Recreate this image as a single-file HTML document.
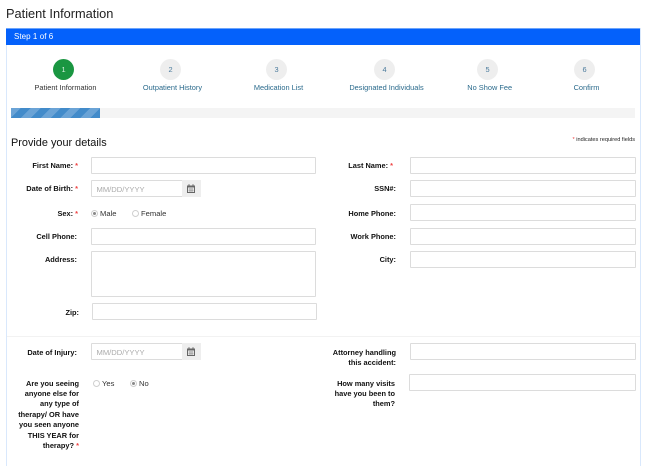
<!DOCTYPE html>
<html><head><meta charset="utf-8"><style>
html,body{margin:0;padding:0;background:#fff}
body{width:645px;height:466px;overflow:hidden;position:relative;font-family:"Liberation Sans",sans-serif;color:#333}
#w{position:absolute;left:0;top:0;width:645px;height:466px;filter:blur(.35px)}
#w div,#w span.a{position:absolute}
.i{background:#fff;border:1px solid #dcdcdc;box-sizing:border-box;border-radius:1px}
.l{font-size:7.4px;font-weight:bold;text-align:right;line-height:10.4px;color:#111;white-space:nowrap}
.c{width:21px;height:21px;border-radius:50%;background:#eee;color:#4a7a9c;font-size:7.4px;line-height:21px;text-align:center;top:59px}
.t{font-size:7.4px;line-height:10px;top:82.5px;color:#2a6a8c;text-align:center;width:120px;white-space:nowrap}
.r{color:#ef4444}
.ad{background:#eee;box-sizing:border-box}
.ph{font-size:7.6px;color:#aaa;line-height:10px;white-space:nowrap}
.rb{width:5px;height:5px;border-radius:50%;border:1px solid #cfcfcf;background:#fff;box-sizing:content-box}
.rb.on::after{content:"";position:absolute;left:1px;top:1px;width:3px;height:3px;border-radius:50%;background:#888}
.rt{font-size:7.6px;line-height:10px;color:#333;white-space:nowrap}
</style></head><body><div id="w">
<div style="left:6px;top:6px;font-size:12.8px;line-height:16px;color:#222;white-space:nowrap">Patient Information</div>

<div style="left:6px;top:28px;width:635px;height:438px;border:1px solid #d9e8fc;border-bottom:0;box-sizing:border-box"></div>
<div style="left:6px;top:28px;width:634px;height:17px;background:#0461fb;border-top:1px solid #6ba4fb;box-sizing:border-box"></div>
<div style="left:14px;top:32px;font-size:8px;line-height:10px;color:#fff;white-space:nowrap;letter-spacing:.05px">Step 1 of 6</div>

<div class="c" style="left:53px;background:#1a9641;color:#d6f0de">1</div>
<div class="c" style="left:160px">2</div>
<div class="c" style="left:266px">3</div>
<div class="c" style="left:374px">4</div>
<div class="c" style="left:477px">5</div>
<div class="c" style="left:574px">6</div>
<div class="t" style="left:5.5px;color:#333">Patient Information</div>
<div class="t" style="left:112.5px">Outpatient History</div>
<div class="t" style="left:218.5px">Medication List</div>
<div class="t" style="left:326.5px">Designated Individuals</div>
<div class="t" style="left:429.7px">No Show Fee</div>
<div class="t" style="left:526.5px">Confirm</div>

<div style="left:11px;top:108px;width:624px;height:10px;background:#f4f4f4"></div>
<div style="left:11px;top:108px;width:89px;height:10px;background:repeating-linear-gradient(-45deg,#428bca 0,#428bca 7px,#6aa3d6 7px,#6aa3d6 14px)"></div>

<div style="left:11px;top:136px;font-size:10.9px;line-height:14px;color:#111;white-space:nowrap">Provide your details</div>
<div style="right:10px;top:136px;font-size:5.6px;line-height:8px;color:#222;white-space:nowrap"><span class="r">*</span> indicates required fields</div>

<div class="l" style="right:567px;top:161px">First Name: <span class="r">*</span></div>
<div class="i" style="left:91px;top:157px;width:225px;height:17px"></div>
<div class="l" style="right:567px;top:184px">Date of Birth: <span class="r">*</span></div>
<div class="i" style="left:91px;top:180px;width:92px;height:17px"></div>
<div class="ph" style="left:96.5px;top:184.5px">MM/DD/YYYY</div>
<div class="ad" style="left:182px;top:180px;width:19px;height:17px"></div>
<svg style="position:absolute;left:187px;top:184px" width="8" height="9" viewBox="0 0 8 9"><path d="M.5 2h7v6.5h-7z" fill="none" stroke="#666" stroke-width="1"/><path d="M.5 1.5h7V3.5h-7z" fill="#666"/><path d="M2 .3v1.6M6 .3v1.6" stroke="#666"/><path d="M1.5 5h5M1.5 6.8h5M3 4v4M5 4v4" stroke="#888" stroke-width=".6"/></svg>

<div class="l" style="right:567px;top:209px">Sex: <span class="r">*</span></div>
<div class="rb on" style="left:91px;top:210px"></div><div class="rt" style="left:100px;top:209px">Male</div>
<div class="rb" style="left:132px;top:210px"></div><div class="rt" style="left:141px;top:209px">Female</div>

<div class="l" style="right:568px;top:232px">Cell Phone:</div>
<div class="i" style="left:91px;top:228px;width:225px;height:17px"></div>
<div class="l" style="right:568px;top:255px">Address:</div>
<div class="i" style="left:91px;top:251px;width:225px;height:46px"></div>
<div class="l" style="right:566px;top:308px">Zip:</div>
<div class="i" style="left:92px;top:303px;width:225px;height:17px"></div>

<div class="l" style="right:252px;top:161px">Last Name: <span class="r">*</span></div>
<div class="i" style="left:410px;top:157px;width:226px;height:17px"></div>
<div class="l" style="right:249px;top:184px">SSN#:</div>
<div class="i" style="left:410px;top:180px;width:226px;height:17px"></div>
<div class="l" style="right:249px;top:209px">Home Phone:</div>
<div class="i" style="left:410px;top:204px;width:226px;height:17px"></div>
<div class="l" style="right:249px;top:232px">Work Phone:</div>
<div class="i" style="left:410px;top:228px;width:226px;height:17px"></div>
<div class="l" style="right:249px;top:255px">City:</div>
<div class="i" style="left:410px;top:251px;width:226px;height:17px"></div>

<div style="left:7px;top:336px;width:633px;height:1px;background:#f2f2f2"></div>

<div class="l" style="right:568px;top:347.5px">Date of Injury:</div>
<div class="i" style="left:91px;top:343px;width:92px;height:17px"></div>
<div class="ph" style="left:96.5px;top:347.5px">MM/DD/YYYY</div>
<div class="ad" style="left:182px;top:343px;width:19px;height:17px"></div>
<svg style="position:absolute;left:187px;top:347px" width="8" height="9" viewBox="0 0 8 9"><path d="M.5 2h7v6.5h-7z" fill="none" stroke="#666" stroke-width="1"/><path d="M.5 1.5h7V3.5h-7z" fill="#666"/><path d="M2 .3v1.6M6 .3v1.6" stroke="#666"/><path d="M1.5 5h5M1.5 6.8h5M3 4v4M5 4v4" stroke="#888" stroke-width=".6"/></svg>

<div class="l" style="right:566px;top:378.5px">Are you seeing<br>anyone else for<br>any type of<br>therapy/ OR have<br>you seen anyone<br>THIS YEAR for<br>therapy? <span class="r">*</span></div>
<div class="rb" style="left:92.5px;top:379.5px"></div><div class="rt" style="left:102px;top:378.5px">Yes</div>
<div class="rb on" style="left:129.5px;top:379.5px"></div><div class="rt" style="left:139px;top:378.5px">No</div>

<div class="l" style="right:249px;top:347.5px">Attorney handling<br>this accident:</div>
<div class="i" style="left:410px;top:343px;width:226px;height:17px"></div>
<div class="l" style="right:250px;top:378.5px">How many visits<br>have you been to<br>them?</div>
<div class="i" style="left:409px;top:374px;width:227px;height:17px"></div>
</div></body></html>
